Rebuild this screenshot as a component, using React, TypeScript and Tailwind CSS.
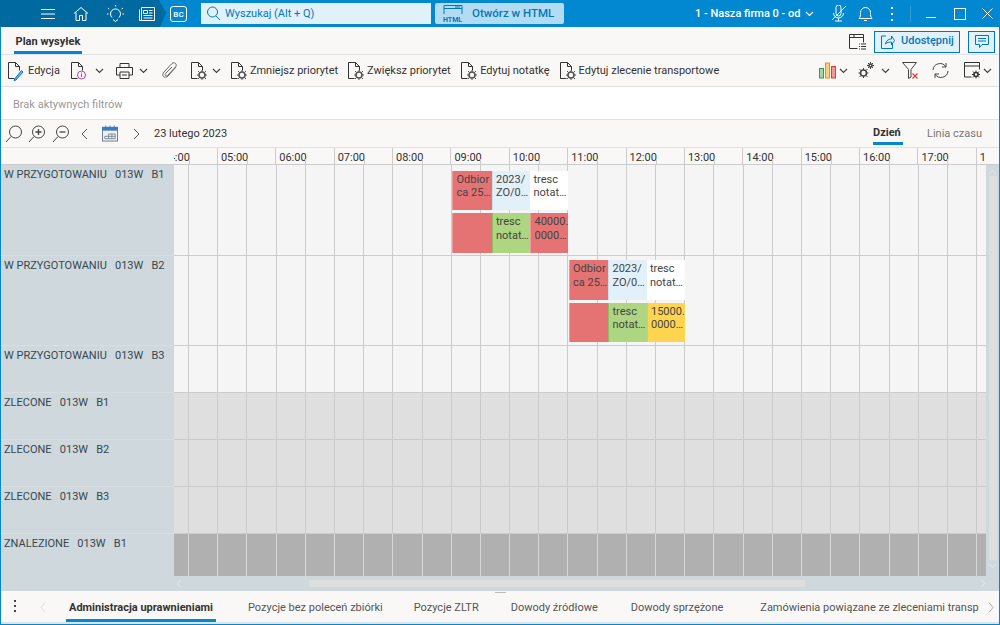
import React from "react";

const S = ({ w = 18, h = 18, vb = "0 0 18 18", c = "#333", sw = 1, className = "", children }: any) => (
  <svg width={w} height={h} viewBox={vb} fill="none" stroke={c} strokeWidth={sw} className={"shrink-0 " + className}>{children}</svg>
);

const Chev = ({ c = "#444", className = "" }: any) => (
  <svg width="9" height="6" viewBox="0 0 9 6" fill="none" stroke={c} strokeWidth="1.2" className={"shrink-0 " + className}><path d="M1 1l3.5 3.5L8 1" /></svg>
);

const Doc = ({ children }: any) => (
  <S w={17} h={20} vb="0 0 17 20">
    <path d="M1.5 17.5V1.5h7l4 4v4M8.5 1.5v4h4M1.5 17.5h6" stroke="#333" />
    {children}
  </S>
);

const GearMark = ({ x = 12, y = 14, r = 3, c = "#555" }: any) => (
  <g stroke={c}>
    <circle cx={x} cy={y} r={r} strokeWidth="1.6" />
    <path d={`M${x} ${y - r - 2}v2M${x} ${y + r}v2M${x - r - 2} ${y}h2M${x + r} ${y}h2M${x - r - 1} ${y - r - 1}l1.5 1.5M${x + r - 0.5} ${y + r - 0.5}l1.5 1.5M${x - r - 1} ${y + r + 1}l1.5-1.5M${x + r - 0.5} ${y - r + 0.5}l1.5-1.5`} strokeWidth="1" />
  </g>
);

const DocGear = () => <Doc><GearMark /></Doc>;

const Mag = ({ mark }: any) => (
  <S w={18} h={18}>
    <circle cx="10.5" cy="7" r="6" stroke="#444" />
    <path d="M6 11.5L1 17" stroke="#444" />
    {mark === "+" && <path d="M7.5 7h6M10.5 4v6" stroke="#444" strokeWidth="1.3" />}
    {mark === "-" && <path d="M7.5 7h6" stroke="#444" strokeWidth="1.3" />}
  </S>
);

const ToolText = ({ label }: { label: string }) => (
  <div className="flex items-center gap-[3px]">
    <DocGear />
    <span className="whitespace-nowrap mt-[1px]">{label}</span>
  </div>
);

function TitleBar() {
  return (
    <div className="h-[27px] shrink-0 bg-[#0288d1] flex items-center text-white relative">
      <div className="h-[27px] w-[166px] shrink-0 bg-[#00699f] [clip-path:polygon(0_0,159px_0,166px_13px,160px_27px,0_27px)] flex items-center pl-[41px]">
        <S w={14} h={12} vb="0 0 14 12" c="#fff"><path d="M0 1.5h14M0 6h14M0 10.5h14" /></S>
        <S w={16} h={16} vb="0 0 16 16" c="#fff" className="ml-[18px]"><path d="M1 7.5L8 1.5l7 6M3 6.5v8h3.5v-5h3v5H13v-8" /></S>
        <S w={19} h={19} vb="0 0 19 19" c="#fff" className="ml-[17px]"><path d="M6 13.5a5 5 0 1 1 7 0M7 15.5l2.5 2 2.5-2M9.5 1v1.5M2 4l1.3 1M17 4l-1.3 1M1 10h1.5M16.5 10H18" /></S>
        <S w={16} h={14} vb="0 0 16 14" c="#fff" className="ml-[14px]"><path d="M.5 2.5v11h15V.5h-13v13M4.500 3.500h4v3h-4zM10 3.500h3.500M10 6h3.500M4.500 8.500h9M4.500 11h9" /></S>
      </div>
      <div className="ml-[4px] w-[17px] h-[16px] border border-white rounded-[3px] text-[8px] font-medium flex items-end justify-center leading-[12px]">BC</div>
      <div className="ml-[14px] w-[230px] h-[21px] bg-[#e1f1fa] flex items-center pl-[5px] text-[#0277bd]">
        <S w={15} h={15} vb="0 0 15 15" c="#0277bd"><circle cx="6.500" cy="6" r="5" /><path d="M10 10l4 4" /></S>
        <span className="ml-[4px] text-[11px] mt-[1px]">Wyszukaj (Alt + Q)</span>
      </div>
      <div className="ml-[4px] w-[129px] h-[21px] bg-[#b3dcf3] rounded-[2px] flex items-center pl-[8px] text-[#0277bd]">
        <svg width="21" height="19" viewBox="0 0 21 19" fill="none" stroke="#0277bd" className="shrink-0">
          <path d="M1 10V1.500h18V10M1 4.500h18M12 3h5" />
          <text x="0" y="18" fontSize="7" fontWeight="700" fill="#0277bd" stroke="none" fontFamily="Roboto">HTML</text>
        </svg>
        <span className="ml-[8px] text-[11.5px] font-medium mt-[1px]">Otwórz w HTML</span>
      </div>
      <span className="ml-[131px] text-[11px] font-medium whitespace-nowrap w-[103px] mt-[1px]">1 - Nasza firma 0 - od</span>
      <Chev c="#fff" className="ml-[7px]" />
      <S w={16} h={17} vb="0 0 16 17" c="#fff" className="ml-[17px]"><path d="M5 2.500a2.500 2.500 0 0 1 5 0v6a2.500 2.500 0 0 1-5 0zM2.500 8a5 5 0 0 0 10 0M7.500 13v3M4 16h7M1 15L15 1" /></S>
      <S w={15} h={17} vb="0 0 15 17" c="#fff" className="ml-[11px]"><path d="M1 13.500c1.500-1.500 1.500-3 1.500-6a5 5 0 0 1 10 0c0 3 0 4.500 1.500 6zM6 15.500h3" /></S>
      <span className="ml-[18px] w-[2px] flex flex-col gap-[4px]"><i className="block w-[2px] h-[2px] bg-white" /><i className="block w-[2px] h-[2px] bg-white" /><i className="block w-[2px] h-[2px] bg-white" /></span>
      <span className="ml-[17px] w-px h-[16px] bg-[#2b9fde]" />
      <span className="ml-[15px] w-[10px] h-px bg-white mt-[8px]" />
      <span className="ml-[18px] w-[12px] h-[12px] border border-white" />
      <S w={11} h={11} vb="0 0 11 11" c="#fff" className="ml-[16px]"><path d="M.5.500l10 10M10.500.500l-10 10" /></S>
    </div>
  );
}

function TabRow() {
  return (
    <div className="h-[28px] shrink-0 flex border-b border-[#e2e2e2] bg-[#f9f8f6] pl-[13px] relative">
      <div className="w-[68px] h-[27px] border-b-[3px] border-[#0288d1] text-[11px] font-bold text-[#333] text-center leading-[29px] whitespace-nowrap">Plan wysyłek</div>
      <div className="ml-auto flex items-center pr-[4px] pt-[2px]">
        <S w={17} h={16} vb="0 0 17 16"><path d="M.5 14.500V.500h14v8M.5 3.500h14M5 .500v3M.5 14.500h8M10 10h1M10 12.500h1M10 15h1M12 10h5M12 12.500h5M12 15h5" /></S>
        <div className="ml-[8px] w-[86px] h-[22px] border border-[#0277bd] bg-[#e1f1fa] text-[#0277bd] text-[11px] font-medium flex items-center pl-[6px] gap-[6px]">
          <S w={14} h={14} vb="0 0 14 14" c="#0277bd"><path d="M5 1H.5v12.500h11V9M4.500 9c.500-3.500 3-5 6-5V1l3 4.500-3 4.500V7c-2.500 0-4.500.500-6 2z" /></S>
          <span>Udostępnij</span>
        </div>
        <div className="ml-[8px] w-[27px] h-[22px] border border-[#0277bd] bg-[#e1f1fa] flex items-center justify-center">
          <S w={14} h={13} vb="0 0 14 13" c="#0277bd"><path d="M.5.500h13v9H7l-2.500 3v-3h-4zM3 3.500h8M3 6h8" /></S>
        </div>
      </div>
    </div>
  );
}

function Toolbar() {
  return (
    <div className="h-[32px] shrink-0 flex items-center bg-[#f9f8f6] border-b border-[#e2e2e2] text-[11px] text-[#333] pl-[6px]">
      <Doc><path d="M8 17.500l-1 2 2-.5 7-8-1.500-1.500z" fill="#7ab3e0" stroke="#0277bd" /></Doc>
      <span className="ml-[4px] mt-[1px]">Edycja</span>
      <div className="ml-[10px]"><Doc><circle cx="11.500" cy="14" r="4" stroke="#a64ca6" /><path d="M11.500 13v3M11.500 11.500v1" stroke="#a64ca6" /></Doc></div>
      <Chev className="ml-[8px]" />
      <S w={17} h={16} vb="0 0 17 16" c="#333" className="ml-[12px]"><path d="M4 4V.500h9V4M4 12H.500V4.500h16V12H13M4 9h9v6.500H4zM6 12h5" /></S>
      <Chev className="ml-[6px]" />
      <S w={16} h={18} vb="0 0 16 18" c="#666" className="ml-[14px]"><path d="M14 5L6 14c-1.500 1.500-3.500 1.500-4.500.5S.5 11.500 2 10l8-8.500c1-1 2.500-1 3.500 0s1 2.500 0 3.500L5.500 13.500c-.7.7-1.500.5-2 0s-.5-1.300 0-2L10 5" /></S>
      <div className="ml-[12px]"><DocGear /></div>
      <Chev className="ml-[5px]" />
      <div className="ml-[9px]"><ToolText label="Zmniejsz priorytet" /></div>
      <div className="ml-[9px]"><ToolText label="Zwiększ priorytet" /></div>
      <div className="ml-[9.500px]"><ToolText label="Edytuj notatkę" /></div>
      <div className="ml-[9px]"><ToolText label="Edytuj zlecenie transportowe" /></div>
      <div className="ml-auto flex items-center pr-[7px]">
        <svg width="17" height="17" viewBox="0 0 17 17" className="shrink-0">
          <rect x=".5" y="6.500" width="4" height="9.500" fill="#a5d6a7" stroke="#2e9e46" />
          <rect x="6.500" y="1" width="4" height="15" fill="#ffcc80" stroke="#ef8c25" />
          <rect x="12.500" y="4.500" width="4" height="11.500" fill="#ef9a9a" stroke="#e53935" />
        </svg>
        <Chev className="ml-[3px]" />
        <S w={17} h={17} vb="0 0 17 17" c="#444" className="ml-[9px]"><GearMark x={6.500} y={11} r={3} c="#444" /><GearMark x={13.500} y={3.500} r={1.500} c="#444" /></S>
        <Chev className="ml-[7px]" />
        <S w={16} h={17} vb="0 0 16 17" c="#444" className="ml-[12px]"><path d="M.5.500h14L9 7.500V15L6.500 16.500v-9z" /><path d="M10.500 11.500l5 5M15.500 11.500l-5 5" stroke="#e53935" strokeWidth="1.200" /></S>
        <S w={17} h={17} vb="0 0 17 17" c="#444" className="ml-[14px]"><path d="M1 8a7 7 0 0 1 13-3M14 1v4h-4M16 9a7 7 0 0 1-13 3M3 16v-4h4" /></S>
        <S w={17} h={17} vb="0 0 17 17" c="#333" className="ml-[15px]"><path d="M.5 15V.5h15v7M.5 4h15M.5 15h7" /><GearMark x={12} y={12.500} r={2} c="#333" /></S>
        <Chev className="ml-[2px]" />
      </div>
    </div>
  );
}

function NavRow() {
  return (
    <div className="h-[28px] shrink-0 flex items-center bg-[#f9f8f6] border-b border-[#e2e2e2] text-[11px] text-[#333] pl-[4px]">
      <Mag />
      <div className="ml-[5px]"><Mag mark="+" /></div>
      <div className="ml-[6px]"><Mag mark="-" /></div>
      <S w={7} h={12} vb="0 0 7 12" c="#555" className="ml-[11px]"><path d="M6 1L1 6l5 5" /></S>
      <svg width="16" height="17" viewBox="0 0 17 17" fill="none" className="ml-[14px] shrink-0">
        <rect x=".5" y="2" width="16" height="14.500" fill="#eef1f4" stroke="#6b7b8c" />
        <rect x="0" y="1.500" width="17" height="4" fill="#3e7cc0" />
        <path d="M4 0v3M8.500 0v3M13 0v3" stroke="#3e7cc0" />
        <path d="M7 9h7v5H3v-2.500h11M7 9v5M10.500 9v5" stroke="#7a8794" />
      </svg>
      <S w={7} h={12} vb="0 0 7 12" c="#555" className="ml-[15px]"><path d="M1 1l5 5-5 5" /></S>
      <span className="ml-[14px] whitespace-nowrap mt-[1px]">23 lutego 2023</span>
      <div className="ml-auto flex h-full">
        <div className="w-[30px] font-bold border-b-[3px] border-[#0288d1] h-[26px] leading-[28px] mt-[-1px] whitespace-nowrap text-[#333]">Dzień</div>
        <div className="ml-[24px] mr-[17px] leading-[27px] text-[#777] whitespace-nowrap">Linia czasu</div>
      </div>
    </div>
  );
}

const HOURS = ["04:00", "05:00", "06:00", "07:00", "08:00", "09:00", "10:00", "11:00", "12:00", "13:00", "14:00", "15:00", "16:00", "17:00", "18:00"];

function HeaderRow() {
  return (
    <div className="h-[17px] shrink-0 flex bg-[#f9f8f6] border-b border-[#cccccc]">
      <div className="w-[173px] shrink-0" />
      <div className="w-[812px] overflow-hidden flex">
        <div className="flex -ml-[14.5px] shrink-0">
          {HOURS.map((h) => (
            <div key={h} className="relative w-[58.38px] h-[16px] shrink-0 border-r border-[#cccccc] pl-[3px] text-[11px] leading-[19px] text-[#333]">
              {h}
              <span className="absolute left-[29px] bottom-0 w-px h-[5px] bg-[#cccccc]" />
            </div>
          ))}
        </div>
      </div>
      <div className="flex-1 bg-[#f9f8f6]" />
    </div>
  );
}

const CELLS = Array.from({ length: 28 }, (_, i) => i);

function Lines({ line }: { line: string }) {
  return (
    <div className="absolute inset-0 flex overflow-hidden">
      <div className={"w-[15px] shrink-0 border-r " + line} />
      {CELLS.map((i) => (
        <div key={i} className={"w-[29.19px] shrink-0 border-r " + line} />
      ))}
    </div>
  );
}

const Ev = ({ bg, a, b }: { bg: string; a?: string; b?: string }) => (
  <div className={"h-[39.5px] overflow-hidden pl-[3.500px] pt-[2px] text-[11px] leading-[13.500px] text-[#444] whitespace-nowrap " + bg}>
    <div>{a}</div>
    <div>{b}</div>
  </div>
);

const RED = "bg-[#e57373] border-l border-[#ef9a9a]";
const BLUE = "bg-[#e1f0f9] border-l border-[#c9dfee]";
const WHITE = "bg-white";
const GREEN = "bg-[#aed581] border-l border-[#8fbf63]";
const YELLOW = "bg-[#ffd54f] border-l border-[#f5bd55]";

function Cluster({ left, top, last }: { left: string; top: string; last: React.ReactNode }) {
  return (
    <div className={"absolute grid grid-cols-[39.500px_38.500px_38px] gap-y-[3px] w-[116px] " + left + " " + top}>
      <Ev bg={RED} a="Odbior" b="ca 25…" />
      <Ev bg={BLUE} a="2023/" b="ZO/0…" />
      <Ev bg={WHITE} a="tresc" b="notat…" />
      <Ev bg={RED} />
      <Ev bg={GREEN} a="tresc" b="notat…" />
      {last}
    </div>
  );
}

const ROWS = [
  { label: "W PRZYGOTOWANIU   013W   B1", h: "h-[91px]", bg: "bg-[#f5f5f5]", line: "border-[#cccccc]" },
  { label: "W PRZYGOTOWANIU   013W   B2", h: "h-[90px]", bg: "bg-[#f5f5f5]", line: "border-[#cccccc]" },
  { label: "W PRZYGOTOWANIU   013W   B3", h: "h-[47px]", bg: "bg-[#f5f5f5]", line: "border-[#cccccc]" },
  { label: "ZLECONE   013W   B1", h: "h-[47px]", bg: "bg-[#dfdfdf]", line: "border-[#cbcbcb]" },
  { label: "ZLECONE   013W   B2", h: "h-[47px]", bg: "bg-[#dfdfdf]", line: "border-[#cbcbcb]" },
  { label: "ZLECONE   013W   B3", h: "h-[47px]", bg: "bg-[#dfdfdf]", line: "border-[#cbcbcb]" },
  { label: "ZNALEZIONE   013W   B1", h: "h-[42px]", bg: "bg-[#b0b0b0]", line: "border-[#d8d8d8]", noB: true },
];

function Schedule() {
  return (
    <div className="flex-1 min-h-0 flex flex-col bg-[#cfd8dd]">
      <div className="flex">
        <div className="w-[173px] shrink-0">
          {ROWS.map((r) => (
            <div key={r.label} className={r.h + " pl-[3px] pt-[3px] text-[11px] leading-[14px] text-[#37474f] whitespace-pre " + (r.noB ? "" : "border-b border-[#d8dfe3]")}>{r.label}</div>
          ))}
        </div>
        <div className="w-[812px] shrink-0">
          {ROWS.map((r, i) => (
            <div key={r.label} className={"relative " + r.h + " " + r.bg + " " + (r.noB ? "" : "border-b " + r.line)}>
              <Lines line={r.line} />
              {i === 0 && <Cluster left="left-[278px]" top="top-[5.500px]" last={<Ev bg={RED} a="40000." b="0000…" />} />}
              {i === 1 && <Cluster left="left-[394.500px]" top="top-[4px]" last={<Ev bg={YELLOW} a="15000." b="0000…" />} />}
            </div>
          ))}
        </div>
        <div className="flex-1 flex flex-col items-center relative">
          <svg width="9" height="6" viewBox="0 0 9 6" fill="none" stroke="#e4eaee" className="mt-[4px]"><path d="M1 5l3.500-3.500L8 5" /></svg>
          <div className="w-[8px] h-[384px] mt-[1px] bg-[#dedede]" />
          <svg width="9" height="6" viewBox="0 0 9 6" fill="none" stroke="#e4eaee" className="mt-[3px]"><path d="M1 1l3.500 3.500L8 1" /></svg>
        </div>
      </div>
      <div className="flex-1 flex items-center relative">
        <S w={6} h={9} vb="0 0 6 9" c="#e4eaee" className="ml-[175px]"><path d="M5 1L1 4.500 5 8" /></S>
        <div className="ml-[127px] w-[496px] h-[7px] bg-[#dedede]" />
        <S w={6} h={9} vb="0 0 6 9" c="#e4eaee" className="ml-[175px]"><path d="M1 1l4 3.500L1 8" /></S>
      </div>
    </div>
  );
}

const TABS: [string, string][] = [
  ["Pozycje bez poleceń zbiórki", "ml-[32px]"],
  ["Pozycje ZLTR", "ml-[31px]"],
  ["Dowody źródłowe", "ml-[32px]"],
  ["Dowody sprzężone", "ml-[33px]"],
  ["Zamówienia powiązane ze zleceniami transp", "ml-[37px]"],
];

function BottomTabs() {
  return (
    <div className="h-[33px] shrink-0 flex items-start bg-[#f9f8f6] border-b-2 border-[#e2e2e2] text-[11px] text-[#555] relative">
      <span className="absolute left-[494px] top-[1px] w-[11px] h-px bg-[#bbb]" />
      <span className="ml-[13px] mt-[9px] w-[2px] flex flex-col gap-[3px] shrink-0"><i className="block w-[2px] h-[2px] bg-[#444]" /><i className="block w-[2px] h-[2px] bg-[#444]" /><i className="block w-[2px] h-[2px] bg-[#444]" /></span>
      <S w={6} h={11} vb="0 0 6 11" c="#dcdcdc" className="ml-[24px] mt-[11px]"><path d="M5 .500L1 5.500l4 5" /></S>
      <div className="ml-[20px] w-[150px] h-[31px] border-b-[3px] border-[#0288d1] text-center font-bold text-[#333] leading-[33px] whitespace-nowrap">Administracja uprawnieniami</div>
      {TABS.map(([t, m]) => (
        <span key={t} className={m + " leading-[33px] whitespace-nowrap"}>{t}</span>
      ))}
      <S w={6} h={11} vb="0 0 6 11" c="#aaa" className="ml-[9px] mt-[11px]"><path d="M1 .500l4 5-4 5" /></S>
    </div>
  );
}

export default function App() {
  return (
    <div className="w-[1000px] h-[625px] flex flex-col overflow-hidden bg-white font-['Roboto',sans-serif]">
      <TitleBar />
      <div className="flex-1 min-h-0 flex flex-col border-x border-b border-[#0288d1]">
        <TabRow />
        <Toolbar />
        <div className="h-[33px] shrink-0 bg-white border-b border-[#e2e2e2] pl-[12px] text-[11px] leading-[35px] text-[#999]">Brak aktywnych filtrów</div>
        <NavRow />
        <HeaderRow />
        <Schedule />
        <BottomTabs />
      </div>
    </div>
  );
}
